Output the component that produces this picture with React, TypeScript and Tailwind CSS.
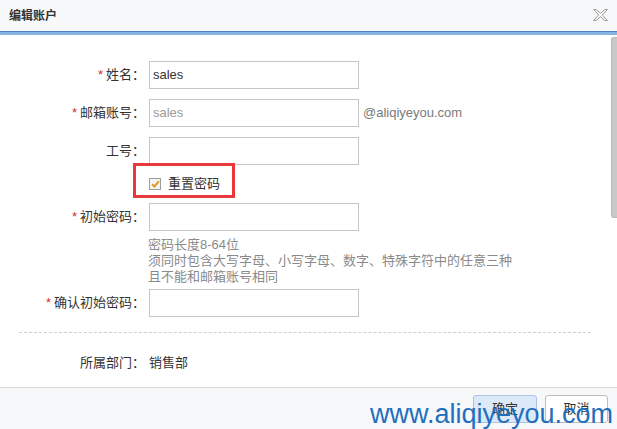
import React from "react";

const FONT = { fontFamily: '"Liberation Sans", "Noto Sans CJK SC", sans-serif' };

function Label({ text, required }: { text: string; required?: boolean }) {
  return (
    <div className="w-[145px] shrink-0 text-right text-[13px] text-[#333] whitespace-nowrap">
      {required && <span className="text-[#c9302c] mr-[3px]">*</span>}
      {text}：
    </div>
  );
}

function Field({
  label,
  required,
  value,
  muted,
  suffix,
}: {
  label: string;
  required?: boolean;
  value?: string;
  muted?: boolean;
  suffix?: string;
}) {
  return (
    <div className="flex items-center h-[28px]">
      <Label text={label} required={required} />
      <div className="ml-[4px] w-[210px] h-[28px] border border-[#c6c6c6] bg-white flex items-center pl-[3px]">
        {value && (
          <span className={"text-[13px] " + (muted ? "text-[#9a9a9a]" : "text-[#333]")}>{value}</span>
        )}
      </div>
      {suffix && <span className="ml-[4px] text-[13px] text-[#7a7a7a]">{suffix}</span>}
    </div>
  );
}

export default function App() {
  return (
    <div className="relative w-[617px] h-[429px] overflow-hidden bg-white flex flex-col" style={FONT}>
      {/* title bar */}
      <div className="h-[31px] shrink-0 bg-[#f7f8fa] flex items-center justify-between pl-[9px] pr-[9px]">
        <span className="text-[12px] font-bold text-[#333]">编辑账户</span>
        <svg width="15" height="12" viewBox="0 0 15 12" className="mt-[-1px]">
          <polygon
            points="0.5,0.5 3,0.5 7.5,4.3 12,0.5 14.5,0.5 9.3,6 14.5,11.5 12,11.5 7.5,7.7 3,11.5 0.5,11.5 5.7,6"
            fill="#fbfbfb"
            stroke="#9a9a9a"
            strokeWidth="1"
          />
        </svg>
      </div>
      <div className="h-[4px] shrink-0 border-t border-[#4d83c6] bg-[#86b4e3]" />

      {/* body */}
      <div className="h-[352px] shrink-0 flex">
        <div className="flex-1 flex flex-col pt-[26px]">
          <Field label="姓名" required value="sales" />
          <div className="h-[10px]" />
          <Field label="邮箱账号" required value="sales" muted suffix="@aliqiyeyou.com" />
          <div className="h-[10px]" />
          <Field label="工号" />
          <div className="h-[10px]" />
          <div className="flex items-center h-[18px]">
            <div className="w-[145px] shrink-0" />
            <div className="ml-[4px] w-[12px] h-[12px] border border-[#9c9c9c] bg-[#f4f4f4] flex items-center justify-center">
              <svg width="9" height="8" viewBox="0 0 9 8">
                <path d="M1 4.2 L3.4 6.5 L8 1.2" fill="none" stroke="#e39a22" strokeWidth="2" />
              </svg>
            </div>
            <span className="ml-[7px] text-[13px] text-[#333]">重置密码</span>
          </div>
          <div className="h-[10px]" />
          <Field label="初始密码" required />
          <div className="ml-[148px] mt-[6px] text-[13px] leading-[16px] text-[#8a8a8a]">
            <div>密码长度8-64位</div>
            <div>须同时包含大写字母、小写字母、数字、特殊字符中的任意三种</div>
            <div>且不能和邮箱账号相同</div>
          </div>
          <div className="h-[4px]" />
          <Field label="确认初始密码" required />
          <div className="ml-[19px] w-[572px] mt-[15px] border-t border-dashed border-[#cfcfcf]" />
          <div className="flex items-center h-[20px] mt-[20px]">
            <Label text="所属部门" />
            <span className="ml-[4px] text-[13px] text-[#333]">销售部</span>
          </div>
        </div>
        <div className="w-[6px] shrink-0 pt-[2px]">
          <div className="h-[181px] rounded-l-[3px] bg-[#c9c9c9] border border-r-0 border-[#b9b9b9]" />
        </div>
      </div>

      {/* footer */}
      <div className="flex-1 border-t border-[#d6d6d6] bg-[#f7f8fa] flex justify-end items-start pt-[7px] pr-[9px] gap-[8px]">
        <div className="w-[64px] h-[28px] rounded-[3px] border border-[#a9c3e3] bg-[#dce9f8] flex items-center justify-center text-[13px] text-[#333]">
          确定
        </div>
        <div className="w-[63px] h-[28px] rounded-[3px] border border-[#bdbdbd] bg-white flex items-center justify-center text-[13px] text-[#333]">
          取消
        </div>
      </div>

      {/* annotation box */}
      <div className="absolute left-[133px] top-[163px] w-[102px] h-[35px] border-[3px] border-[#e8383a]" />

      {/* watermark */}
      <div className="absolute left-[370px] top-[401px] text-[27px] leading-none text-[#1f6fbe] whitespace-nowrap">
        www.aliqiyeyou.com
      </div>
    </div>
  );
}
